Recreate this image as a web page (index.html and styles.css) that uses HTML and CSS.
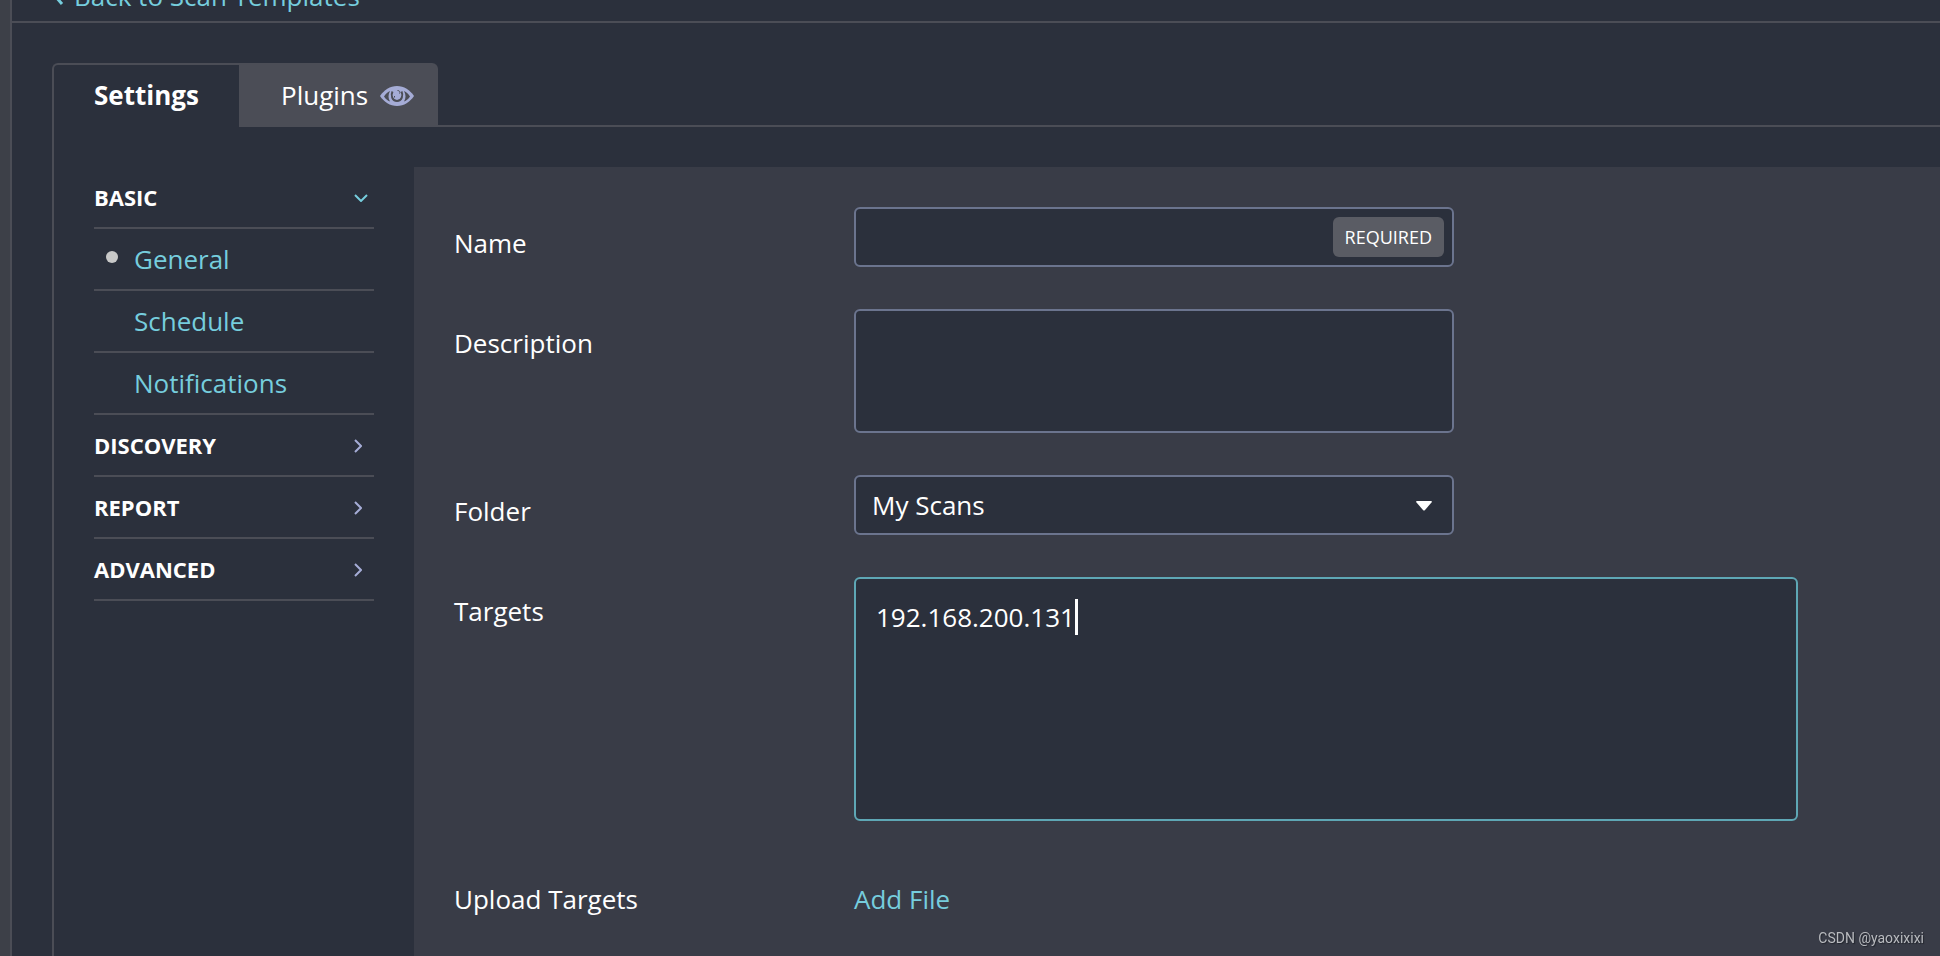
FILE: index.html
```html
<!DOCTYPE html>
<html lang="en">
<head>
<meta charset="utf-8">
<title>New Scan</title>
<link rel="stylesheet" href="styles.css">
</head>
<body>
<div class="app">
  <header class="page-head">
    <a class="back" href="#">
      <svg class="back-icon" viewBox="0 0 10 20" aria-hidden="true"><path d="M8 4 2 11l6 7"/></svg>
      <span>Back to Scan Templates</span>
    </a>
  </header>
  <main class="editor">
    <div class="tabs" role="tablist">
      <button class="tab tab-active" role="tab" aria-selected="true">Settings</button>
      <button class="tab tab-idle" role="tab" aria-selected="false">
        <span>Plugins</span>
        <svg class="eye" viewBox="0 0 34 20" aria-hidden="true">
          <path class="eye-fill" d="M0 10C4 4 10 0 17 0s13 4 17 10c-4 6-10 10-17 10S4 16 0 10Z"/>
          <path class="eye-white" d="M4 10.500C5.500 8 7.500 6 10 5c-2 3.500-2 7.500 0 10.500C7.500 14.500 5.500 13 4 10.500ZM30 10.500C28.500 8 26.500 6 24 5c2 3.500 2 7.500 0 10.500 2.500-1 4.500-2.500 6-5Z"/>
          <path class="eye-ring" d="M12.500 5.500c-1.800 3.500-.5 9.500 4.500 9.500s6.300-6 4.500-9.500"/>
          <path class="eye-glint" d="M17.500 4.500c2 0 3 1.500 2 3M14.500 10v1.500"/>
        </svg>
      </button>
    </div>
    <div class="content">
      <nav class="sidebar">
        <button class="group"><span>BASIC</span><svg class="chev chev-open" viewBox="0 0 14 8" aria-hidden="true"><path d="m1 1 6 6 6-6"/></svg></button>
        <a class="item item-current" href="#">General</a>
        <a class="item" href="#">Schedule</a>
        <a class="item" href="#">Notifications</a>
        <button class="group"><span>DISCOVERY</span><svg class="chev" viewBox="0 0 8 14" aria-hidden="true"><path d="m1 1 6 6-6 6"/></svg></button>
        <button class="group"><span>REPORT</span><svg class="chev" viewBox="0 0 8 14" aria-hidden="true"><path d="m1 1 6 6-6 6"/></svg></button>
        <button class="group"><span>ADVANCED</span><svg class="chev" viewBox="0 0 8 14" aria-hidden="true"><path d="m1 1 6 6-6 6"/></svg></button>
      </nav>
      <form class="panel">
        <div class="row">
          <label class="label" for="name">Name</label>
          <div class="control">
            <input class="field" id="name" type="text">
            <span class="required">REQUIRED</span>
          </div>
        </div>
        <div class="row">
          <label class="label label-area" for="description">Description</label>
          <div class="control"><textarea class="field field-area" id="description"></textarea></div>
        </div>
        <div class="row">
          <label class="label" for="folder">Folder</label>
          <div class="control">
            <select class="field field-select" id="folder"><option>My Scans</option></select>
            <svg class="arrow" viewBox="0 0 16 10" aria-hidden="true"><path d="M1 0h14q1.500 0 .5 1.500L9 9q-1 1-2 0L.5 1.500Q-.5 0 1 0Z"/></svg>
          </div>
        </div>
        <div class="row">
          <label class="label label-area" for="targets">Targets</label>
          <div class="control control-wide">
            <textarea class="field field-targets" id="targets">192.168.200.131</textarea>
            <span class="caret"></span>
          </div>
        </div>
        <div class="row">
          <span class="label">Upload Targets</span>
          <a class="label link" href="#">Add File</a>
        </div>
      </form>
    </div>
  </main>
</div>
<span class="watermark">CSDN @yaoxixixi</span>
</body>
</html>
```
FILE: styles.css
```css
* { box-sizing: border-box; }

body {
  margin: 0;
  height: 100vh;
  overflow: hidden;
  background: #3d4048;
  color: #fff;
  font-family: "Open Sans", "Noto Sans", sans-serif;
  font-size: 26px;
  line-height: 36px;
}

a { color: #76cddd; text-decoration: none; }

button {
  margin: 0;
  border: 0;
  background: none;
  color: inherit;
  font: inherit;
  text-align: left;
}

.app {
  display: flex;
  flex-direction: column;
  min-height: 100vh;
  margin-left: 10px;
  border-left: 2px solid #4b4d56;
  background: #2b303c;
}

.page-head {
  display: flex;
  flex-direction: column;
  justify-content: flex-end;
  height: 23px;
  padding: 0 42px 7px;
  border-bottom: 2px solid #4b4d56;
}

.back { display: flex; gap: 10px; align-items: center; }

.back-icon {
  width: 10px;
  height: 20px;
  fill: none;
  stroke: #76cddd;
  stroke-width: 3;
}

.editor {
  display: flex;
  flex: 1;
  flex-direction: column;
  padding: 40px 0 0 40px;
}

.tabs { display: flex; }

.tabs::after {
  content: "";
  flex: 1;
  border-bottom: 2px solid #4b4d56;
}

.tab { height: 64px; }

.tab-active {
  width: 187px;
  padding: 0 0 2px 40px;
  border: solid #4b4d56;
  border-width: 2px 0 0 2px;
  border-top-left-radius: 6px;
  font-weight: 700;
}

.tab-idle {
  display: flex;
  gap: 12px;
  align-items: center;
  padding: 0 24px 0 42px;
  border-top-right-radius: 6px;
  background: #4b4d56;
}

.eye { width: 34px; height: 20px; margin-top: 2px; }
.eye-fill { fill: #a5acd6; }
.eye-white { fill: #4b4d56; }
.eye-ring { fill: none; stroke: #4b4d56; stroke-width: 2; }
.eye-glint { fill: none; stroke: #4b4d56; stroke-width: 1; }

.content {
  display: flex;
  flex: 1;
  gap: 40px;
  padding: 40px 0 0 40px;
  border-left: 2px solid #4b4d56;
}

.sidebar {
  display: flex;
  flex: none;
  flex-direction: column;
  width: 280px;
}

.group, .item {
  display: flex;
  align-items: center;
  height: 62px;
  border-bottom: 2px solid #4b4d56;
}

.group {
  justify-content: space-between;
  padding: 0;
  font-size: 22px;
  font-weight: 700;
}

.item { padding-left: 40px; }

.item-current { padding-left: 12px; }

.item-current::before {
  content: "";
  width: 12px;
  height: 12px;
  margin: 0 16px 4px 0;
  border-radius: 50%;
  background: #c8c8c8;
}

.chev {
  width: 8px;
  height: 14px;
  margin: 2px 12px 0 0;
  fill: none;
  stroke: #a5acd6;
  stroke-width: 2;
}

.chev-open {
  width: 14px;
  height: 8px;
  margin-right: 6px;
  stroke: #76cddd;
}

.panel {
  display: flex;
  flex: 1;
  flex-direction: column;
  gap: 42px;
  padding: 40px;
  background: #393c47;
}

.row {
  display: grid;
  grid-template-columns: 400px 1fr;
  align-items: start;
}

.label { padding-top: 18px; }

.label-area { padding-top: 16px; }

.link { justify-self: start; }

.control {
  display: flex;
  position: relative;
  max-width: 600px;
}

.control-wide { max-width: 944px; }

.field {
  width: 100%;
  height: 60px;
  margin: 0;
  padding: 0 16px;
  border: 2px solid #6b748e;
  border-radius: 6px;
  outline: 0;
  background: #2b303c;
  color: #fff;
  font: inherit;
  resize: none;
}

.field-area { height: 124px; padding: 20px; }

.field-select { appearance: none; }

.field-targets {
  height: 244px;
  padding: 20px;
  border-color: #5ea7b5;
}

.required {
  position: absolute;
  top: 10px;
  right: 10px;
  padding: 0 12px;
  border-radius: 6px;
  background: #5a5c64;
  font-size: 18px;
  line-height: 40px;
}

.arrow {
  position: absolute;
  top: 26px;
  right: 22px;
  width: 16px;
  height: 10px;
  fill: #fff;
  pointer-events: none;
}

.caret {
  position: absolute;
  top: 22px;
  left: 221px;
  width: 3px;
  height: 36px;
  background: #fff;
}

.watermark {
  position: fixed;
  right: 16px;
  bottom: 8px;
  color: #b9bbbf;
  font-family: Roboto, sans-serif;
  font-size: 14px;
  line-height: 20px;
  text-shadow: 1px 1px 1px #22252d;
}
```
